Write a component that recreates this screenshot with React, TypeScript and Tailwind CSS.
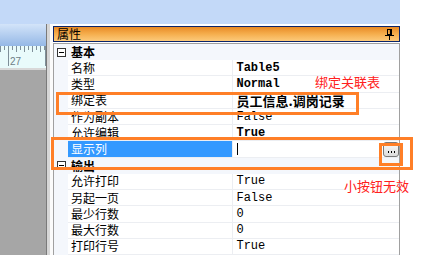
import React from "react";

type Row = {
  cat?: string;
  name?: string;
  value?: string;
  bold?: boolean;
  big?: boolean;
  selected?: boolean;
  caret?: boolean;
  button?: boolean;
};

const rows: Row[] = [
  { cat: "基本" },
  { name: "名称", value: "Table5", bold: true },
  { name: "类型", value: "Normal", bold: true },
  { name: "绑定表", value: "员工信息.调岗记录", big: true },
  { name: "作为副本", value: "False" },
  { name: "允许编辑", value: "True", bold: true },
  { name: "显示列", selected: true, caret: true, button: true },
  { cat: "输出" },
  { name: "允许打印", value: "True" },
  { name: "另起一页", value: "False" },
  { name: "最少行数", value: "0" },
  { name: "最大行数", value: "0" },
  { name: "打印行号", value: "True" },
];

const cjk = { fontFamily: '"Noto Sans CJK SC", "Noto Sans", sans-serif' };
const mono = { fontFamily: '"Liberation Mono", "Noto Sans CJK SC", monospace' };

function Ruler() {
  const ticks = [];
  for (let x = 0; x <= 47; x += 4) {
    ticks.push(<line key={x} x1={x + 0.5} y1={0} x2={x + 0.5} y2={x % 8 === 0 ? 6 : 4} stroke="#7f8f99" strokeWidth={1} />);
  }
  return (
    <svg width="47" height="22" className="block">
      <rect width="47" height="22" fill="#e9fbfb" />
      {ticks}
      <line x1={8.5} y1={0} x2={8.5} y2={20} stroke="#7f8f99" />
      <text x={10} y={19} fontSize="10" fill="#6d7d86" fontFamily="Liberation Sans, sans-serif">27</text>
      <line x1={45.5} y1={0} x2={45.5} y2={20} stroke="#7f8f99" />
      <text x={46} y={19} fontSize="10" fill="#6d7d86" fontFamily="Liberation Sans, sans-serif">2</text>
    </svg>
  );
}

function Minus() {
  return (
    <svg width="9" height="9" className="block">
      <rect x="0.5" y="0.5" width="8" height="8" fill="#fff" stroke="#333" />
      <line x1="2" y1="4.5" x2="7" y2="4.5" stroke="#000" />
    </svg>
  );
}

function Pin() {
  return (
    <svg width="9" height="11" className="block">
      <rect x="2.5" y="0.5" width="4" height="5" fill="none" stroke="#000" />
      <line x1="5.5" y1="0" x2="5.5" y2="6" stroke="#000" strokeWidth="1.2" />
      <line x1="0" y1="6.5" x2="9" y2="6.5" stroke="#000" />
      <line x1="4.5" y1="7" x2="4.5" y2="11" stroke="#000" />
    </svg>
  );
}

function PropRow({ r }: { r: Row }) {
  if (r.cat) {
    return (
      <div className="flex h-[17px] bg-[#f4f7fc]">
        <div className="w-[14px] flex items-center justify-center pl-[1px]">
          <Minus />
        </div>
        <div className="flex-1 pl-[3px] flex items-center text-[12px] font-bold text-black leading-none" style={cjk}>
          {r.cat}
        </div>
      </div>
    );
  }
  return (
    <div className="flex h-[17px]">
      <div className="w-[14px] bg-[#f4f7fc]" />
      <div className="w-[165px] border-b border-[#eceef2] flex">
        <div
          className={
            "flex-1 pl-[3px] flex items-center text-[12px] leading-none " +
            (r.selected ? "bg-[#3399ff] text-white mt-[0px]" : "text-black")
          }
          style={cjk}
        >
          {r.name}
        </div>
      </div>
      <div className="w-[1px] bg-[#eceef2]" />
      <div className="w-[166px] border-b border-[#eceef2] flex items-center justify-between pl-[3px]">
        {r.caret ? (
          <div className="w-[1px] h-[12px] bg-black ml-[1px]" />
        ) : r.big ? (
          <span className="text-[13px] font-bold text-black leading-none" style={cjk}>
            {r.value}
          </span>
        ) : (
          <span className={"text-[12px] text-black leading-none " + (r.bold ? "font-bold" : "")} style={mono}>
            {r.value}
          </span>
        )}
        {r.button && (
          <div className="w-[16px] h-[15px] rounded-[3px] border border-[#7a7a7a] bg-linear-to-b from-[#fafafa] to-[#dcdcdc] flex items-end justify-center pb-[3px] gap-[1px]">
            <div className="w-[1px] h-[2px] bg-black" />
            <div className="w-[1px] h-[2px] bg-black ml-[1px]" />
            <div className="w-[1px] h-[2px] bg-black ml-[1px]" />
          </div>
        )}
      </div>
    </div>
  );
}

export default function App() {
  return (
    <div className="relative w-[423px] h-[255px] overflow-hidden bg-white flex flex-col">
      <div className="h-[24px] w-[400px] bg-[#c3d9f8] shrink-0" />
      <div className="flex flex-1 min-h-0">
        <div className="w-[46px] flex flex-col shrink-0">
          <div className="h-[22px] bg-linear-to-b from-[#d3e4f9] to-[#95b8e6]" />
          <div className="h-[22px] overflow-hidden">
            <Ruler />
          </div>
          <div className="h-[2px] bg-[#d8d8d8]" />
          <div className="flex-1 bg-[#a6a6a6]" />
        </div>
        <div className="w-[1px] bg-[#7a7a7a]" />
        <div className="w-[3px] bg-[#d6d6d6]" />
        <div className="w-[3px] bg-[#fbfbfb]" />
        <div className="w-[347px] flex flex-col pt-[2px] shrink-0">
          <div className="h-[16px] border border-[#0a246a] bg-linear-to-b from-[#e88a22] via-[#f5ae4d] to-[#fcca7a] flex items-center justify-between pl-[3px] pr-[5px]">
            <span className="text-[12px] leading-none text-black" style={cjk}>
              属性
            </span>
            <Pin />
          </div>
          <div className="h-[1px]" />
          <div className="flex-1 flex flex-col border-t border-t-[#a0a0a0] border-l border-l-[#a0a0a0] border-r border-r-[#a0a0a0] overflow-hidden">
            {rows.map((r, i) => (
              <PropRow key={i} r={r} />
            ))}
          </div>
        </div>
      </div>

      {/* annotations */}
      <div className="absolute left-[56px] top-[92px] w-[303px] h-[23px] border-[3px] border-[#ff7f27]" />
      <div className="absolute left-[315px] top-[74px] text-[13px] leading-[16px] text-[#ff2020]" style={cjk}>
        绑定关联表
      </div>
      <div className="absolute left-[51px] top-[137px] w-[362px] h-[33px] border-[3px] border-[#ff7f27]" />
      <div className="absolute left-[379px] top-[143px] w-[24px] h-[23px] border-[3px] border-[#ff7f27]" />
      <div className="absolute left-[344px] top-[174px] w-[55px] h-[23px] bg-white" />
      <div className="absolute left-[344px] top-[178px] text-[13px] leading-[16px] text-[#ff2020]" style={cjk}>
        小按钮无效
      </div>
    </div>
  );
}
